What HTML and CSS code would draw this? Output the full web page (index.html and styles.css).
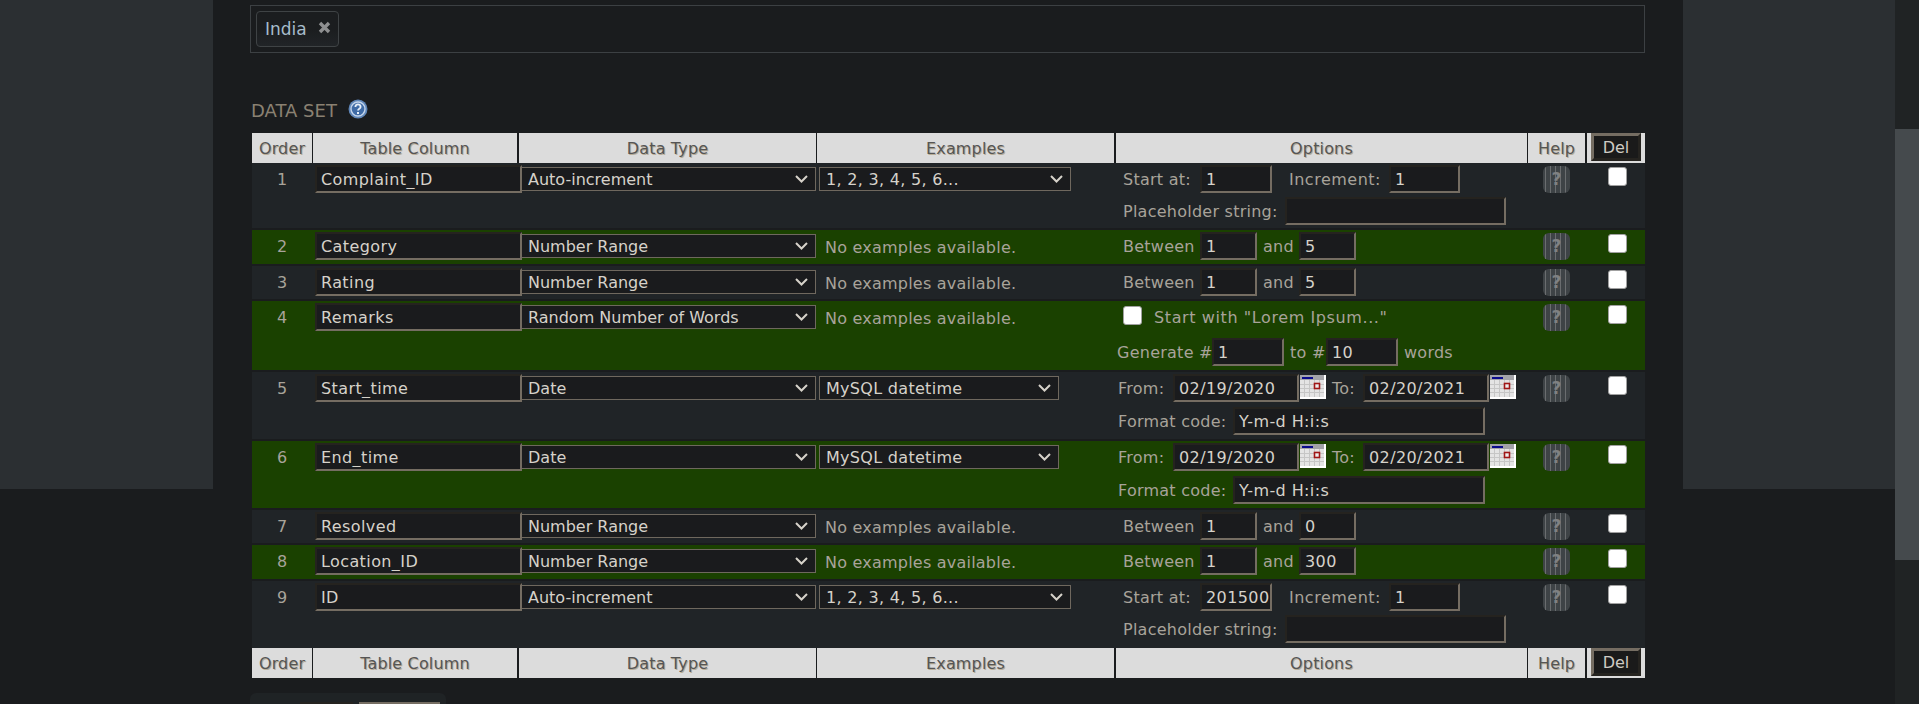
FILE: index.html
```html
<!DOCTYPE html>
<html lang="en">
<head>
  <meta charset="UTF-8" />
  <meta name="viewport" content="width=device-width, initial-scale=1.0"/>
  <title>Data Set</title>
  <link rel="stylesheet" href="styles.css">
</head>
<body>
<div class="page">
  <div class="side"></div>

  <div class="main">
    <div class="tags">
      <span class="tag">India
        <svg class="tag-x" width="13" height="13" viewBox="0 0 13 13"><path d="M2 2l9 9M11 2l-9 9" stroke="#8e8f90" stroke-width="3.4" fill="none"/></svg>
      </span>
    </div>

    <h2 class="title">
      DATA SET
      <svg class="title-help" width="20" height="20" viewBox="0 0 20 20">
        <circle cx="10" cy="10" r="9.5" fill="#5f86b8"/>
        <circle cx="10" cy="10" r="7" fill="#3f6ba6" stroke="#c3d4ea" stroke-width="1.4"/>
        <path d="M7.4 8a2.6 2.6 0 0 1 5.2 0c0 1.7-2.6 1.8-2.6 3.6" fill="none" stroke="#e6eef8" stroke-width="1.8"/>
        <rect x="9" y="13" width="2" height="2" fill="#e6eef8"/>
      </svg>
    </h2>

    <div class="grid head">
      <div class="th">Order</div>
      <div class="th">Table Column</div>
      <div class="th">Data Type</div>
      <div class="th">Examples</div>
      <div class="th">Options</div>
      <div class="th">Help</div>
      <div class="th th-del"><button class="del-btn">Del</button></div>
    </div>

    <!-- row 1 -->
    <div class="grid row first">
      <div class="num">1</div>
      <div class="name"><input type="text" value="Complaint_ID"></div>
      <div class="dtype"><select><option>Auto-increment</option></select></div>
      <div class="ex"><select class="ex-wide"><option>1, 2, 3, 4, 5, 6...</option></select></div>
      <div class="opts">
        <div class="line"><span class="l-start">Start at:</span><input class="i-72" type="text" value="1"><span class="l-inc">Increment:</span><input class="i-71" type="text" value="1"></div>
        <div class="line"><span class="l-ph">Placeholder string:</span><input class="i-221" type="text"></div>
      </div>
      <div class="help"><span class="help-icon">?</span></div>
      <div class="chk"><input type="checkbox"></div>
    </div>

    <!-- row 2 -->
    <div class="grid row single green">
      <div class="num">2</div>
      <div class="name"><input type="text" value="Category"></div>
      <div class="dtype"><select><option>Number Range</option></select></div>
      <div class="ex ex-none">No examples available.</div>
      <div class="opts">
        <div class="line"><span class="l-start">Between</span><input class="i-57" type="text" value="1"><span class="l-and">and</span><input class="i-57" type="text" value="5"></div>
      </div>
      <div class="help"><span class="help-icon">?</span></div>
      <div class="chk"><input type="checkbox"></div>
    </div>

    <!-- row 3 -->
    <div class="grid row single">
      <div class="num">3</div>
      <div class="name"><input type="text" value="Rating"></div>
      <div class="dtype"><select><option>Number Range</option></select></div>
      <div class="ex ex-none">No examples available.</div>
      <div class="opts">
        <div class="line"><span class="l-start">Between</span><input class="i-57" type="text" value="1"><span class="l-and">and</span><input class="i-57" type="text" value="5"></div>
      </div>
      <div class="help"><span class="help-icon">?</span></div>
      <div class="chk"><input type="checkbox"></div>
    </div>

    <!-- row 4 -->
    <div class="grid row lorem green">
      <div class="num">4</div>
      <div class="name"><input type="text" value="Remarks"></div>
      <div class="dtype"><select><option>Random Number of Words</option></select></div>
      <div class="ex ex-none">No examples available.</div>
      <div class="opts">
        <div class="line"><input class="lorem-chk" type="checkbox"><span class="lorem-text">Start with "Lorem Ipsum..."</span></div>
        <div class="line"><span class="l-gen">Generate #</span><input class="i-72" type="text" value="1"><span class="l-to">to #</span><input class="i-72" type="text" value="10"><span class="l-words">words</span></div>
      </div>
      <div class="help"><span class="help-icon">?</span></div>
      <div class="chk"><input type="checkbox"></div>
    </div>

    <!-- row 5 -->
    <div class="grid row date">
      <div class="num">5</div>
      <div class="name"><input type="text" value="Start_time"></div>
      <div class="dtype"><select><option>Date</option></select></div>
      <div class="ex"><select class="ex-narrow"><option>MySQL datetime</option></select></div>
      <div class="opts">
        <div class="line">
          <span class="l-from">From:</span><input class="i-126" type="text" value="02/19/2020">
          <svg class="cal" width="26" height="24" viewBox="0 0 26 24"><use href="#cal"/></svg>
          <span class="l-till">To:</span><input class="i-126" type="text" value="02/20/2021">
          <svg class="cal" width="26" height="24" viewBox="0 0 26 24"><use href="#cal"/></svg>
        </div>
        <div class="line"><span class="l-fmt">Format code:</span><input class="i-252" type="text" value="Y-m-d H:i:s"></div>
      </div>
      <div class="help"><span class="help-icon">?</span></div>
      <div class="chk"><input type="checkbox"></div>
    </div>

    <!-- row 6 -->
    <div class="grid row date green">
      <div class="num">6</div>
      <div class="name"><input type="text" value="End_time"></div>
      <div class="dtype"><select><option>Date</option></select></div>
      <div class="ex"><select class="ex-narrow"><option>MySQL datetime</option></select></div>
      <div class="opts">
        <div class="line">
          <span class="l-from">From:</span><input class="i-126" type="text" value="02/19/2020">
          <svg class="cal" width="26" height="24" viewBox="0 0 26 24"><use href="#cal"/></svg>
          <span class="l-till">To:</span><input class="i-126" type="text" value="02/20/2021">
          <svg class="cal" width="26" height="24" viewBox="0 0 26 24"><use href="#cal"/></svg>
        </div>
        <div class="line"><span class="l-fmt">Format code:</span><input class="i-252" type="text" value="Y-m-d H:i:s"></div>
      </div>
      <div class="help"><span class="help-icon">?</span></div>
      <div class="chk"><input type="checkbox"></div>
    </div>

    <!-- row 7 -->
    <div class="grid row single">
      <div class="num">7</div>
      <div class="name"><input type="text" value="Resolved"></div>
      <div class="dtype"><select><option>Number Range</option></select></div>
      <div class="ex ex-none">No examples available.</div>
      <div class="opts">
        <div class="line"><span class="l-start">Between</span><input class="i-57" type="text" value="1"><span class="l-and">and</span><input class="i-57" type="text" value="0"></div>
      </div>
      <div class="help"><span class="help-icon">?</span></div>
      <div class="chk"><input type="checkbox"></div>
    </div>

    <!-- row 8 -->
    <div class="grid row single green">
      <div class="num">8</div>
      <div class="name"><input type="text" value="Location_ID"></div>
      <div class="dtype"><select><option>Number Range</option></select></div>
      <div class="ex ex-none">No examples available.</div>
      <div class="opts">
        <div class="line"><span class="l-start">Between</span><input class="i-57" type="text" value="1"><span class="l-and">and</span><input class="i-57" type="text" value="300"></div>
      </div>
      <div class="help"><span class="help-icon">?</span></div>
      <div class="chk"><input type="checkbox"></div>
    </div>

    <!-- row 9 -->
    <div class="grid row last">
      <div class="num">9</div>
      <div class="name"><input type="text" value="ID"></div>
      <div class="dtype"><select><option>Auto-increment</option></select></div>
      <div class="ex"><select class="ex-wide"><option>1, 2, 3, 4, 5, 6...</option></select></div>
      <div class="opts">
        <div class="line"><span class="l-start">Start at:</span><input class="i-72" type="text" value="201500"><span class="l-inc">Increment:</span><input class="i-71" type="text" value="1"></div>
        <div class="line"><span class="l-ph">Placeholder string:</span><input class="i-221" type="text"></div>
      </div>
      <div class="help"><span class="help-icon">?</span></div>
      <div class="chk"><input type="checkbox"></div>
    </div>

    <div class="grid head">
      <div class="th">Order</div>
      <div class="th">Table Column</div>
      <div class="th">Data Type</div>
      <div class="th">Examples</div>
      <div class="th">Options</div>
      <div class="th">Help</div>
      <div class="th th-del"><button class="del-btn">Del</button></div>
    </div>

    <div class="add-box">
      <span class="add-input"></span>
      <span class="add-btn"></span>
    </div>
  </div>

  <div class="side"></div>

  <div class="scrollbar"><div class="thumb"></div></div>
</div>

<svg class="defs" width="0" height="0">
  <symbol id="cal" viewBox="0 0 26 24">
    <rect width="26" height="24" fill="#fff"/>
    <rect x="0" y="0" width="24" height="22" fill="#e4e4e4"/>
    <rect x="0" y="0" width="24" height="5" fill="#a3a3a8"/>
    <rect x="2" y="2" width="11" height="2" fill="#0a0a8c"/>
    <path d="M0 9.5h24M0 13.5h24M0 17.5h24M4.5 5v17M9.5 5v17M14.5 5v17M19.5 5v17" stroke="#c6c6c6" fill="none"/>
    <rect x="14.5" y="8.5" width="5" height="5" fill="#eee" stroke="#a01818" stroke-width="1.6"/>
  </symbol>
</svg>
</body>
</html>
```

FILE: styles.css
```css
html, body {
  margin: 0;
  height: 704px;
  overflow: hidden;
  background-color: #1a1c1e;
  font-family: "DejaVu Sans", sans-serif;
  font-size: 16px;
  color: #a8a39a;
}
.page {
  display: flex;
  align-items: flex-start;
  height: 704px;
}
.side {
  width: 212px;
  height: 489px;
  flex: none;
  background-color: #2b2f32;
}
.side:first-child {
  width: 213px;
}
.main {
  width: 1470px;
  flex: none;
  padding: 5px 0 0 37px;
  box-sizing: border-box;
  height: 704px;
  overflow: hidden;
}
.scrollbar {
  width: 24px;
  height: 704px;
  flex: none;
  padding-top: 129px;
  box-sizing: border-box;
  background-color: #202324;
}
.thumb {
  height: 431px;
  background-color: #454a4d;
}
.defs {
  position: absolute;
}

/* country tags */
.tags {
  width: 1395px;
  height: 48px;
  box-sizing: border-box;
  padding: 5px;
  border: 1px solid #3c4043;
}
.tag {
  display: inline-flex;
  align-items: center;
  width: 83px;
  height: 36px;
  box-sizing: border-box;
  padding-left: 8px;
  border: 1px solid #3f4345;
  border-radius: 4px;
  background: linear-gradient(#1b1d1f 50%, #212427);
  color: #a7bccb;
  font-size: 17px;
}
.tag-x {
  margin: -3px 0 0 11px;
}

.title {
  display: flex;
  align-items: center;
  gap: 11px;
  margin: 47px 0 0 1px;
  height: 20px;
  font-size: 18px;
  font-weight: normal;
  color: #8a8172;
}
.title-help {
  margin-top: -2px;
}

/* table */
.grid {
  display: grid;
  grid-template-columns: 61px 206px 298px 299px 412px 59px 58px;
  width: 1393px;
  margin-left: 2px;
}
.head {
  height: 30px;
}
.title + .head {
  margin-top: 13px;
}
.th {
  display: flex;
  align-items: center;
  justify-content: center;
  background-color: #dcdcdc;
  border-right: 1px solid #1a1c1e;
  color: #555;
  letter-spacing: .15px;
  text-shadow: 1px 1px 0 #b8ad98;
}
.th:nth-child(2), .th:nth-child(4), .th:nth-child(6) {
  border-right-width: 2px;
}
.th-del {
  align-items: flex-start;
  border-right: 0;
}
.del-btn {
  width: 50px;
  height: 28px;
  box-sizing: border-box;
  padding: 0;
  background-color: #1a1a1a;
  border: 3px solid;
  border-color: #756d62 #25231f #25231f #756d62;
  color: #cfcbc4;
  font-family: inherit;
  font-size: 16px;
  text-shadow: none;
}

.row {
  background-color: #202427;
  border-bottom: 2px solid #1a1c1e;
}
.green {
  background-color: #1a4100;
}
.first {
  height: 65px;
}
.single {
  height: 33px;
}
.green.single {
  height: 34px;
}
.lorem {
  height: 69px;
}
.date {
  height: 67px;
}
.last {
  height: 67px;
  border-bottom: 0;
}

.num {
  padding: 5px 1px 0 0;
  line-height: 24px;
  text-align: center;
}
.name {
  padding: 2px 0 0 2px;
}
.name input {
  width: 207px;
  position: relative;
}
.dtype {
  padding: 4px 0 0 1px;
}
.dtype select {
  width: 296px;
}
.ex {
  padding: 4px 0 0 2px;
}
.ex select {
  padding-left: 1px;
  letter-spacing: .3px;
}
.ex-none {
  padding: 8px 0 0 8px;
  line-height: 20px;
  letter-spacing: .22px;
}
.ex-wide {
  width: 252px;
}
.ex-narrow {
  width: 240px;
}
.opts {
  display: flex;
  flex-direction: column;
  gap: 4px;
  padding: 2px 0 0 7px;
  letter-spacing: .25px;
}
.date .opts {
  gap: 5px;
}
.lorem .opts {
  gap: 7px;
}
.line {
  display: flex;
  align-items: center;
  height: 28px;
  white-space: nowrap;
}
.help {
  padding: 3px 0 0 15px;
}
.help-icon {
  display: block;
  width: 27px;
  height: 27px;
  border-radius: 6px;
  background: repeating-linear-gradient(90deg, #3e4346 0 2px, #6a6d6f 2px 3px, #3e4346 3px 5px);
  color: #7f8183;
  font: bold 17px/27px "DejaVu Sans", sans-serif;
  text-align: center;
}
.chk {
  padding: 4px 0 0 21px;
}
.chk input, .lorem-chk {
  appearance: none;
  display: block;
  width: 19px;
  height: 19px;
  margin: 0;
  box-sizing: border-box;
  background-color: #fff;
  border: 1px solid #a0a0a0;
  border-radius: 3px;
}
.lorem-chk {
  margin: -3px 12px 0 0;
}
.lorem-text {
  letter-spacing: .6px;
}

input[type="text"] {
  height: 28px;
  box-sizing: border-box;
  margin: 0;
  padding: 0 0 0 4px;
  background-color: #1a1b1d;
  border: 2px solid;
  border-color: #25231f #756d62 #756d62 #25231f;
  color: #d6d2ca;
  font-family: inherit;
  font-size: 16px;
  letter-spacing: .4px;
  outline: 0;
}
select {
  appearance: none;
  height: 24px;
  box-sizing: border-box;
  margin: 0;
  padding: 0 0 0 7px;
  background: #1a1b1d url("data:image/svg+xml,%3Csvg xmlns='http://www.w3.org/2000/svg' width='13' height='8'%3E%3Cpath d='M1 1l5.5 5.5L12 1' fill='none' stroke='%23d6d2ca' stroke-width='2'/%3E%3C/svg%3E") no-repeat right 7px center;
  border: 1px solid #6f685e;
  border-radius: 0;
  color: #d6d2ca;
  font-family: inherit;
  font-size: 16px;
}
.ex select {
  padding-left: 6px;
}

/* option labels, sized so the inputs land on the same columns */
.l-start { width: 77px; }
.l-inc { width: 100px; margin-left: 17px; letter-spacing: .5px; }
.l-ph { width: 162px; }
.l-and { width: 36px; margin-left: 6px; }
.l-gen { width: 95px; margin-left: -6px; }
.l-to { width: 36px; margin-left: 6px; }
.l-words { margin-left: 6px; }
.l-from { width: 55px; margin-left: -5px; }
.l-till { width: 31px; margin-left: 6px; }
.l-fmt { width: 115px; margin-left: -5px; }
.i-57 { width: 57px; }
.i-71 { width: 71px; }
.i-72 { width: 72px; }
.i-126 { width: 126px; }
.i-221 { width: 221px; }
.i-252 { width: 252px; }
.cal {
  flex: none;
  margin: -3px 0 0 1px;
}

.add-box {
  display: flex;
  align-items: flex-start;
  width: 196px;
  height: 40px;
  box-sizing: border-box;
  margin-top: 15px;
  padding: 9px 0 0 50px;
  border-radius: 6px;
  background-color: #1f2325;
}
.add-input {
  width: 53px;
  height: 28px;
  box-sizing: border-box;
  border-top: 2px solid #25231f;
  background-color: #1a1b1d;
}
.add-btn {
  width: 81px;
  height: 28px;
  margin-left: 6px;
  background-color: #756d62;
}
```
